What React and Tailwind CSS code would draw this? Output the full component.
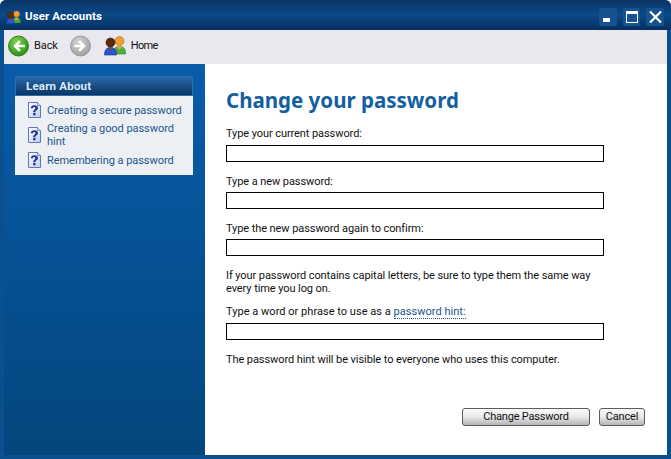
import React from "react";

const font = { fontFamily: 'Roboto, "Noto Sans", sans-serif' };

function UsersIcon({ size = 22 }) {
  return (
    <svg width={size} height={size} viewBox="0 0 22 22">
      <circle cx="15.500" cy="6" r="4.500" fill="#f0a030" stroke="#b56a10" strokeWidth="0.6" />
      <path d="M9 19c0-5 2-7.500 6.500-7.500s6 2.500 6 7.500z" fill="#4fae3a" stroke="#2c7a20" strokeWidth="0.6" />
      <path d="M12.500 11.500h6l-3 3z" fill="#f0b040" />
      <circle cx="6.500" cy="7.500" r="4.500" fill="#5a2a12" stroke="#2e1608" strokeWidth="0.6" />
      <path d="M0.500 20c0-5 2-7.500 6-7.500s6 2.500 6 7.500z" fill="#2a55d0" stroke="#16308a" strokeWidth="0.6" />
      <path d="M4 12.500h5l-2.500 3z" fill="#8a4a20" />
    </svg>
  );
}

function NavCircle({ dir, colors, rim }) {
  const d = dir === "left" ? "M15.500 10.500H8M11 6.500L7 10.500l4 4" : "M5.500 10.500H13M10 6.500l4 4-4 4";
  const id = "g" + dir;
  return (
    <svg width="21" height="22" viewBox="0 0 21 21">
      <defs>
        <radialGradient id={id} cx="40%" cy="30%" r="80%">
          <stop offset="0" stopColor={colors[0]} />
          <stop offset="1" stopColor={colors[1]} />
        </radialGradient>
      </defs>
      <circle cx="10.500" cy="10.500" r="10" fill={`url(#${id})`} stroke={rim} strokeWidth="0.8" />
      <path d={d} fill="none" stroke="#fff" strokeWidth="2.600" strokeLinecap="square" />
    </svg>
  );
}

function HelpIcon() {
  return (
    <svg className="shrink-0" width="15" height="16" viewBox="0 0 15 16">
      <defs>
        <linearGradient id="hp" x1="0" y1="0" x2="1" y2="1">
          <stop offset="0" stopColor="#ffffff" />
          <stop offset="1" stopColor="#bccdec" />
        </linearGradient>
      </defs>
      <path d="M1.500.5h9l3 3v12h-12z" fill="url(#hp)" stroke="#5f78b4" />
      <path d="M10.500.5v3h3" fill="#e6edf9" stroke="#5f78b4" strokeWidth="0.8" />
      <path d="M3.800 6.200c0-2 1.500-3 3.500-3s3.600 1 3.600 2.800c0 1.400-.8 2-1.600 2.500-.8.500-1 .9-1 1.800H6.200c0-1.300.4-2 1.200-2.600.6-.4 1-.8 1-1.500 0-.7-.5-1.100-1.200-1.100-.8 0-1.200.5-1.300 1.200z" fill="#1f2f9a" />
      <rect x="6.200" y="11" width="2.300" height="2.300" fill="#1f2f9a" />
    </svg>
  );
}

function Field({ label, gap = "mt-[4px]", className = "", labelClass = "tracking-[-0.08px]" }) {
  return (
    <div className={className}>
      <div className={"h-[13px] text-[11px] leading-[13px] text-[#111] " + labelClass}>{label}</div>
      <div className={"h-[17px] w-[378px] border border-black bg-white " + gap} />
    </div>
  );
}

function Btn({ children, className = "" }) {
  return (
    <div className={"flex h-[18px] items-center justify-center rounded-[3px] border border-[#5c5c5c] bg-gradient-to-b from-[#fbfbfb] via-[#e8e8e8] to-[#b4b4b4] pt-[1px] text-[11px] tracking-[-0.2px] text-[#111] " + className}>
      {children}
    </div>
  );
}

export default function App() {
  return (
    <div className="flex h-[459px] w-[671px] flex-col overflow-hidden rounded-t-[6px] bg-[#04487f] text-[11px]" style={font}>
      <div className="flex h-[30px] shrink-0 items-center bg-gradient-to-b from-[#0a3564] via-[#0a4a88] to-[#062f5e] pt-[4px] pr-[7px] pl-[6px]">
        <UsersIcon size={15} />
        <span className="ml-[4px] text-[11.5px] font-bold tracking-[0.1px] text-white">User Accounts</span>
        <div className="ml-auto flex items-center">
          <div className="flex h-[18px] w-[18px] items-end justify-start rounded-[2px] bg-[#15528f] pb-[4px] pl-[4px]">
            <div className="h-[4px] w-[7px] bg-white" />
          </div>
          <div className="ml-[6px] flex h-[18px] w-[17px] items-center justify-center rounded-[2px] bg-[#15528f]">
            <div className="h-[12px] w-[12px] border border-t-[3px] border-white" />
          </div>
          <div className="ml-[6px] flex h-[18px] w-[18px] items-center justify-center rounded-[2px] bg-[#15528f]">
            <svg width="13" height="12" viewBox="0 0 13 12">
              <path d="M1 .5l11 11M12 .5l-11 11" stroke="#fff" strokeWidth="2.200" />
            </svg>
          </div>
        </div>
      </div>
      <div className="flex min-h-0 flex-1 flex-col border-x-[4px] border-b-[4px] border-[#0a4f8e]">
        <div className="flex h-[34px] shrink-0 items-center bg-[#e9e8ee] pb-[2px] pl-[4px] text-[11px] tracking-[-0.1px] text-[#111]">
          <NavCircle dir="left" colors={["#7fd44a", "#1e8a14"]} rim="#1a6a10" />
          <span className="ml-[5px]">Back</span>
          <span className="ml-[12px] flex">
            <NavCircle dir="right" colors={["#d4d4d4", "#9a9a9a"]} rim="#8c8c8c" />
          </span>
          <span className="ml-[13px] flex">
            <UsersIcon />
          </span>
          <span className="ml-[5px] tracking-[-0.7px]">Home</span>
        </div>
        <div className="flex min-h-0 flex-1">
          <aside className="w-[201px] shrink-0 bg-gradient-to-b from-[#0a5cab] to-[#03467c] pt-[12px] pl-[11px]">
            <div className="w-[178px]">
              <div className="flex h-[20px] items-center rounded-t-[2px] border border-[#2a6fb0] bg-gradient-to-b from-[#2a6aa8] to-[#0a3564] pt-[1px] pl-[10px] text-[11.5px] font-bold tracking-[0.2px] text-[#d8ecfb]">
                Learn About
              </div>
              <div className="flex flex-col bg-[#ecf0f4] pt-[6px] pr-[6px] pb-[7px] pl-[12px] text-[11px] leading-[13px] tracking-[-0.05px] text-[#22558c]">
                <div className="flex items-center gap-[5px]">
                  <HelpIcon />
                  <span>Creating a secure password</span>
                </div>
                <div className="mt-[4px] flex items-center gap-[5px]">
                  <HelpIcon />
                  <span>Creating a good password hint</span>
                </div>
                <div className="mt-[4px] flex items-center gap-[5px]">
                  <HelpIcon />
                  <span>Remembering a password</span>
                </div>
              </div>
            </div>
          </aside>
          <main className="flex min-w-0 flex-1 flex-col bg-white pt-[22px] pl-[21px]">
            <h1 className="h-[28px] text-[20.5px] leading-[28px] font-bold text-[#135f9f]" style={{ fontFamily: '"Noto Sans", sans-serif' }}>
              Change your password
            </h1>
            <Field label="Type your current password:" gap="mt-[5px]" className="mt-[13px]" />
            <Field label="Type a new password:" className="mt-[13px]" />
            <Field label="Type the new password again to confirm:" className="mt-[13px]" />
            <p className="mt-[13px] w-[385px] text-[11px] leading-[13px] tracking-[-0.08px] text-[#111]">
              If your password contains capital letters, be sure to type them the same way every time you log on.
            </p>
            <Field
              label={
                <>
                  Type a word or phrase to use as a <span className="border-b border-dotted border-[#22558c] text-[#22558c]">password hint:</span>
                </>
              }
              gap="mt-[5px]"
              labelClass="tracking-[0.03px]"
              className="mt-[10px]"
            />
            <p className="mt-[13px] text-[11px] leading-[13px] tracking-[-0.08px] text-[#111]">The password hint will be visible to everyone who uses this computer.</p>
            <div className="mt-[42px] flex justify-end gap-[9px] pr-[22px]">
              <Btn className="w-[128px]">Change Password</Btn>
              <Btn className="w-[46px]">Cancel</Btn>
            </div>
          </main>
        </div>
      </div>
    </div>
  );
}
